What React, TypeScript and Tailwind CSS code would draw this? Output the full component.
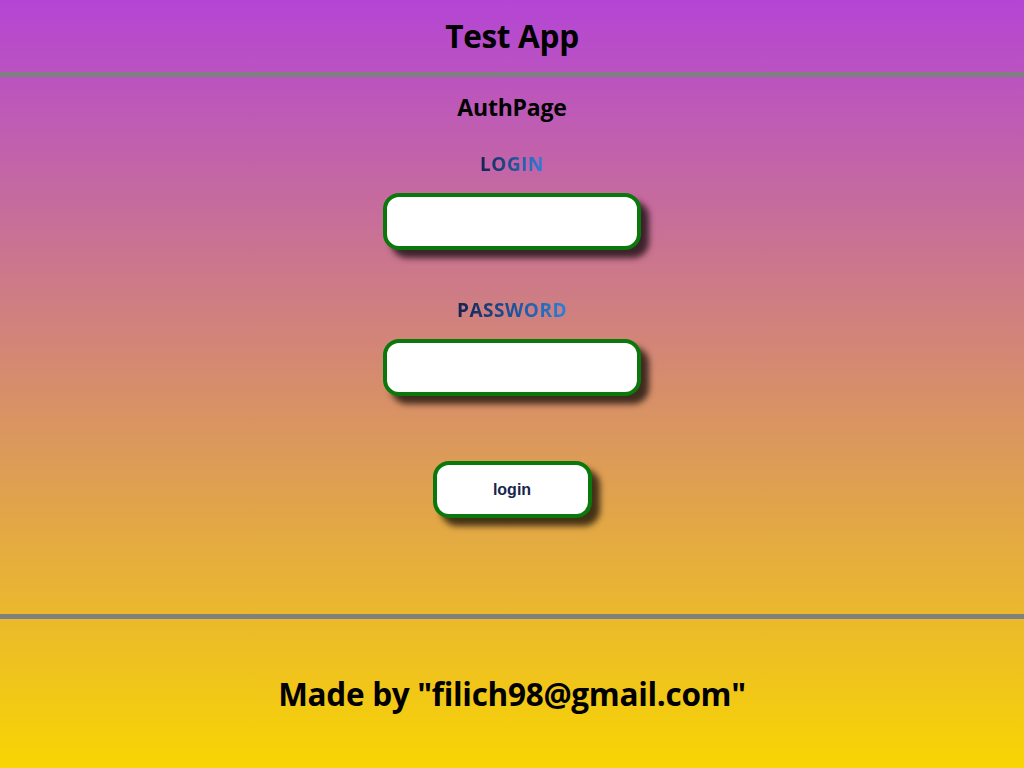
import React, { useState } from 'react';

const labelCls =
  "inline-block bg-[linear-gradient(to_right,#15224f,#2a80dc)] bg-clip-text text-transparent text-[19px] leading-[28px] font-bold tracking-[0.5px]";

const fieldCls =
  "w-[258px] h-[57px] rounded-[16px] border-4 border-[#0b780b] bg-white px-4 outline-none shadow-[8px_8px_6px_rgba(0,0,0,0.7)] text-base font-['Liberation_Sans',sans-serif]";

export default function App() {
  const [login, setLogin] = useState('');
  const [password, setPassword] = useState('');

  return (
    <div className="min-h-screen h-[768px] flex flex-col bg-[linear-gradient(to_bottom,#b445d5,#f8d503)] font-['Open_Sans','Noto_Sans',sans-serif] text-black">
      <header className="h-[72px] shrink-0 flex items-center justify-center">
        <h1 className="text-[31.5px] font-bold leading-none tracking-[-0.3px]">Test App</h1>
      </header>
      <div className="h-[5px] bg-[#808080] shrink-0" />

      <main className="flex-1 flex flex-col items-center pt-[14px]">
        <h2 className="text-[23px] leading-[32px] font-bold tracking-[-0.2px]">AuthPage</h2>

        <div className="mt-[27px]">
          <span className={labelCls}>LOGIN</span>
        </div>
        <input
          className={`${fieldCls} mt-[15px]`}
          value={login}
          onChange={e => setLogin(e.target.value)}
        />

        <div className="mt-[46px]">
          <span className={labelCls}>PASSWORD</span>
        </div>
        <input
          type="password"
          className={`${fieldCls} mt-[15px]`}
          value={password}
          onChange={e => setPassword(e.target.value)}
        />

        <button className="mt-[65px] w-[159px] h-[57px] rounded-[16px] border-4 border-[#0b780b] bg-white shadow-[8px_8px_6px_rgba(0,0,0,0.7)] text-[16px] font-bold text-[#17264d] font-['Liberation_Sans',sans-serif]">
          login
        </button>
      </main>

      <div className="h-[5px] bg-[#808080] shrink-0" />
      <footer className="h-[149px] shrink-0 flex items-center justify-center">
        <p className="text-[31.5px] font-bold leading-none tracking-[-0.3px]">Made by "filich98@gmail.com"</p>
      </footer>
    </div>
  );
}
